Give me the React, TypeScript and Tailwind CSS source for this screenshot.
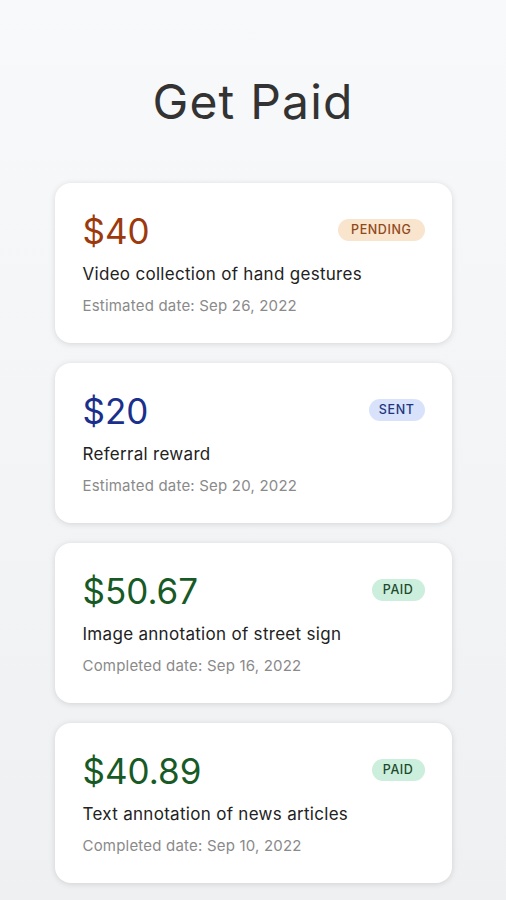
import React from 'react';

type Status = 'PENDING' | 'SENT' | 'PAID';

interface Payment {
  amount: string;
  title: string;
  dateLabel: string;
  status: Status;
}

const payments: Payment[] = [
  { amount: '$40', title: 'Video collection of hand gestures', dateLabel: 'Estimated date: Sep 26, 2022', status: 'PENDING' },
  { amount: '$20', title: 'Referral reward', dateLabel: 'Estimated date: Sep 20, 2022', status: 'SENT' },
  { amount: '$50.67', title: 'Image annotation of street sign', dateLabel: 'Completed date: Sep 16, 2022', status: 'PAID' },
  { amount: '$40.89', title: 'Text annotation of news articles', dateLabel: 'Completed date: Sep 10, 2022', status: 'PAID' },
];

// colours per status: amount text, badge bg, badge text
const statusStyles: Record<Status, { amount: string; badge: string }> = {
  PENDING: { amount: 'text-[#9c3a0e]', badge: 'bg-[#f9e4cd] text-[#8f4a1c] px-[13px]' },
  SENT: { amount: 'text-[#1b2f8c]', badge: 'bg-[#d8e3fb] text-[#1f3580] px-2.5' },
  PAID: { amount: 'text-[#175a26]', badge: 'bg-[#cbeedd] text-[#1d4a2c] px-[11px]' },
};

const PaymentCard: React.FC<{ payment: Payment }> = ({ payment }) => {
  const style = statusStyles[payment.status];
  return (
    <div className="h-[160px] w-[397px] rounded-2xl bg-white pl-7 pr-[27px] pt-[27px] shadow-[0_1px_6px_rgba(0,0,0,0.13)]">
      <div className="flex items-center justify-between">
        <span className={`text-[35px] leading-[42px] ${style.amount}`}>{payment.amount}</span>
        <span className={`mb-0.5 flex h-[22px] items-center rounded-full text-[12.5px] font-medium tracking-[0.6px] ${style.badge}`}>
          {payment.status}
        </span>
      </div>
      <p className="mt-[12px] text-[17px] leading-5 tracking-[0.3px] text-[#222]">{payment.title}</p>
      <p className="mt-[12px] text-[15px] leading-5 tracking-[0.2px] text-[#8a8a8a]">{payment.dateLabel}</p>
    </div>
  );
};

export default function App() {
  return (
    <div
      className="flex min-h-[900px] w-full flex-col items-center bg-gradient-to-b from-[#f8f9fb] to-[#eff0f2]"
      style={{ fontFamily: 'Inter, "Noto Sans", sans-serif' }}
    >
      <h1 className="mt-[73px] text-[48px] leading-[58px] tracking-[1.2px] text-[#333]">Get Paid</h1>
      <div className="mt-[52px] flex flex-col gap-5">
        {payments.map((p) => (
          <PaymentCard key={p.title} payment={p} />
        ))}
      </div>
    </div>
  );
}
